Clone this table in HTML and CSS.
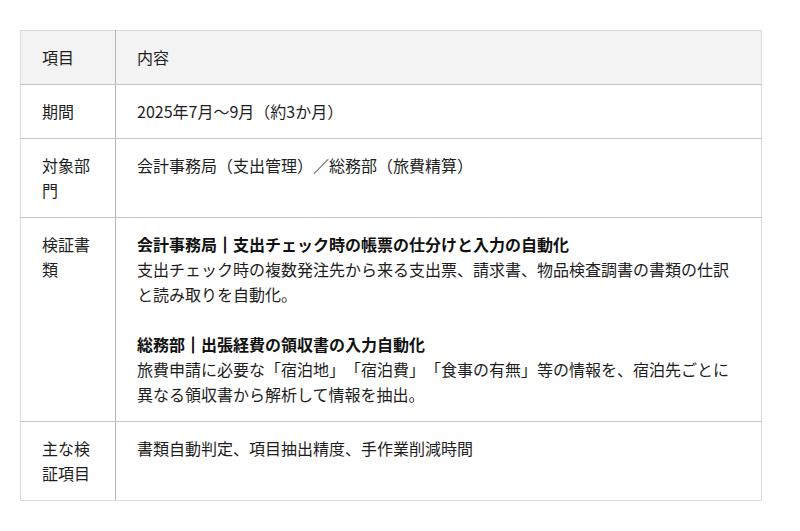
FILE: index.html
```html
<!DOCTYPE html>
<html lang="ja">
<head>
<meta charset="utf-8">
<title>検証概要</title>
<link rel="stylesheet" href="styles.css">
</head>
<body>
<div class="page">
  <table class="spec">
    <thead>
      <tr>
        <th class="label">項目</th>
        <th class="value">内容</th>
      </tr>
    </thead>
    <tbody>
      <tr>
        <td class="label">期間</td>
        <td class="value">2025年7月～9月（約3か月）</td>
      </tr>
      <tr>
        <td class="label">対象部門</td>
        <td class="value">会計事務局（支出管理）／総務部（旅費精算）</td>
      </tr>
      <tr>
        <td class="label">検証書類</td>
        <td class="value">
          <div class="doc-block">
            <strong class="doc-title">会計事務局<span class="sep">｜</span>支出チェック時の帳票の仕分けと入力の自動化</strong>
            <p class="doc-text">支出チェック時の複数発注先から来る支出票、請求書、物品検査調書の書類の仕訳と読み取りを自動化。</p>
          </div>
          <div class="doc-block">
            <strong class="doc-title">総務部<span class="sep">｜</span>出張経費の領収書の入力自動化</strong>
            <p class="doc-text">旅費申請に必要な「宿泊地」「宿泊費」「食事の有無」等の情報を、宿泊先ごとに異なる領収書から解析して情報を抽出。</p>
          </div>
        </td>
      </tr>
      <tr>
        <td class="label">主な検証項目</td>
        <td class="value">書類自動判定、項目抽出精度、手作業削減時間</td>
      </tr>
    </tbody>
  </table>
</div>
</body>
</html>
```

FILE: styles.css
```css
html, body {
  margin: 0;
  padding: 0;
  background: #ffffff;
}

.page {
  padding: 30px 38px 30px 20px;
  font-family: "Noto Sans CJK JP", sans-serif;
  font-size: 16px;
  line-height: 25px;
  color: #1e1e1e;
  text-spacing-trim: space-all;
}

.spec {
  width: 742px;
  border-collapse: collapse;
  border: 1px solid #dcdcdc;
}

.spec th,
.spec td {
  padding: 14px 21px;
  text-align: left;
  vertical-align: top;
  font-weight: normal;
  border-bottom: 1px solid #c4c4c4;
}

.spec tbody tr:last-child td {
  border-bottom: 1px solid #dcdcdc;
}

.spec thead tr {
  background: #f3f3f3;
}

.spec .label {
  width: 52px;
  border-right: 1px solid #b4b4b4;
}

.doc-block + .doc-block {
  margin-top: 25px;
}

.doc-title {
  display: block;
  font-weight: bold;
  color: #111111;
}

.sep {
  color: #111111;
  -webkit-text-stroke: 1px #111111;
}

.doc-text {
  margin: 0;
}
```
